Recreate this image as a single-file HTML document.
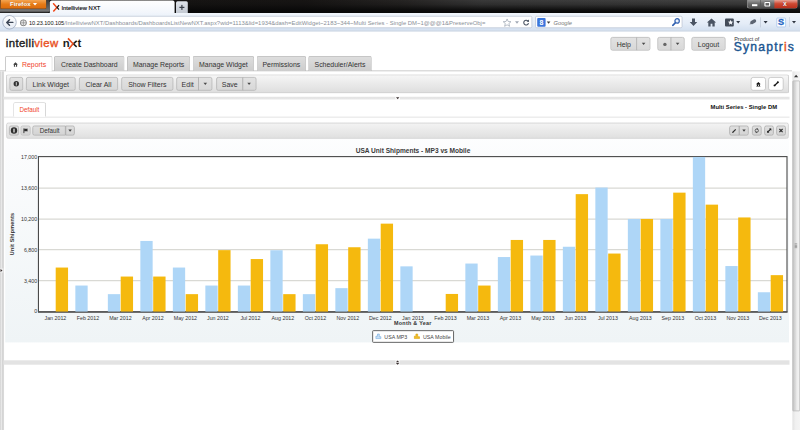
<!DOCTYPE html>
<html><head><meta charset="utf-8"><title>Intelliview NXT</title>
<style>
*{box-sizing:border-box;margin:0;padding:0}
html,body{font-family:"Liberation Sans",sans-serif;}
.abs{position:absolute}
#root{position:relative;width:8000px;height:4300px;overflow:hidden;background:#fff}
.t{position:absolute;white-space:nowrap;line-height:1;color:#333}
.btn{position:absolute;border:8px solid #b2b2b2;border-radius:20px;background:linear-gradient(#e2e2e2,#d8d8d8);font-size:70px;letter-spacing:-0.2px;color:#333;text-align:center;white-space:nowrap}
.arr{border-left:18.5px solid transparent;border-right:18.5px solid transparent;border-top:23px solid #4a4a4a;width:0;height:0}
.tb{top:770px;height:137px;line-height:130px}
.wb{top:1256px;height:99px;background:linear-gradient(#dedede,#d4d4d4);border-color:#ababab}
.tab{position:absolute;top:560px;height:150px;border:8px solid #b5b5b5;border-bottom:none;border-radius:20px 20px 0 0;background:linear-gradient(#dedede,#cdcdcd);font-size:69.5px;line-height:154px;text-align:center;color:#333;white-space:nowrap}
</style><style>html,body{width:800px;height:430px;overflow:hidden;background:#fff;margin:0} #clip{position:relative;width:800px;height:430px;overflow:hidden;contain:strict} #root{transform:scale(0.1);transform-origin:0 0}</style></head><body><div id="clip"><div id="root">

<!-- browser chrome -->
<div class="abs" style="left:0;top:0;width:8000px;height:130px;background:linear-gradient(to bottom,rgba(8,8,8,0) 0,rgba(8,8,8,0.25) 35%,rgba(8,8,8,0.85) 75%,rgba(8,8,8,1) 100%),linear-gradient(100deg,#151312 0,#171514 38%,#262423 50%,#3a3a3a 60%,#444 100%)"></div>
<div class="abs" style="left:0;top:0;width:496px;height:128px;background:linear-gradient(#3a3a3a,#6a6a6a 72%,#767676 84%,#4a4a4a 94%,#222);border-radius:0 0 20px 0"></div>
<div class="abs" style="left:0;top:0;width:466px;height:92px;background:linear-gradient(#f4a552,#e67a16 50%,#dc6c0c);border-radius:0 0 20px 20px;border:6px solid #9a4c08;border-top:none"></div>
<div class="t" style="left:100px;top:9px;font-size:62px;font-weight:bold;color:#fff;text-shadow:0 0 6px #a85a12">Firefox</div>
<div class="abs" style="left:329px;top:31px;border-left:21px solid transparent;border-right:21px solid transparent;border-top:25px solid #fff"></div>
<div class="abs" style="left:498px;top:6px;width:1248px;height:130px;background:linear-gradient(#fefefe,#f1f5fb);border-radius:20px 20px 0 0"></div>
<svg class="abs" style="left:522px;top:28px" width="80" height="100" viewBox="0 0 8 10"><path d="M0.9 0.5 L4.7 4.7 L1.1 8.7" stroke="#f0491a" stroke-width="1.5" fill="none"/><path d="M6.8 2.3 L4.9 4.7 L6.8 6.9" stroke="#1a1a1a" stroke-width="1.25" fill="none"/></svg>
<div class="t" style="left:614px;top:54px;font-size:59px;color:#000;-webkit-text-stroke:1.2px #000">Intelliview NXT</div>
<div class="abs" style="left:1760px;top:12px;width:118px;height:118px;background:linear-gradient(#dfe3e9,#c3c9d2);border-radius:15px 15px 0 0"></div>
<div class="abs" style="left:1794px;top:68px;width:50px;height:12px;background:#3a3f48"></div>
<div class="abs" style="left:1813px;top:49px;width:12px;height:50px;background:#3a3f48"></div>
<!-- window controls -->
<div class="abs" style="left:7470px;top:0;width:506px;height:86px;border-radius:0 0 25px 25px;background:linear-gradient(#9a9a9a,#6c6c6c 45%,#4e4e4e);border:6px solid #a9a9a9;border-top:none"></div>
<div class="abs" style="left:7744px;top:0;width:230px;height:82px;border-radius:0 0 25px 0;background:linear-gradient(#e9a698,#cf4a34 45%,#b9301c)"></div>
<div class="abs" style="left:7604px;top:0;width:6px;height:84px;background:#555"></div>
<div class="abs" style="left:7520px;top:42px;width:54px;height:20px;background:#fff;box-shadow:0 0 0 .40px #444"></div>
<div class="abs" style="left:7644px;top:19px;width:58px;height:46px;border:11.5px solid #fff;border-radius:8px;box-shadow:0 0 0 .40px #444"></div>
<div class="t" style="left:7830px;top:4px;font-size:68px;font-weight:bold;color:#fff;text-shadow:0 0 8px #600">x</div>

<!-- nav bar -->
<div class="abs" style="left:0;top:130px;width:8000px;height:184px;background:linear-gradient(#f0f5fb,#e4ecf7 60%,#d3e0f0);border-bottom:8px solid #b4c3d8"></div>
<div class="abs" style="left:120px;top:159px;width:5202px;height:122px;background:#fff;border:7px solid #b9c3d3;border-radius:15px"></div>
<div class="abs" style="left:24px;top:152px;width:142px;height:142px;border-radius:71px;background:linear-gradient(#ffffff,#e4eaf3);border:7px solid #93a1b8"></div>
<svg class="abs" style="left:54px;top:187px" width="84" height="74" viewBox="0 0 8 7"><path d="M7.2 3.5 H1.5 M3.9 0.9 L1.3 3.5 L3.9 6.1" stroke="#3c4656" stroke-width="1.35" fill="none" stroke-linecap="round" stroke-linejoin="round"/></svg>
<svg class="abs" style="left:198px;top:192px" width="72" height="72" viewBox="0 0 6.4 6.4"><circle cx="3.2" cy="3.2" r="2.7" fill="#e9e9e9" stroke="#777" stroke-width="0.8"/><path d="M0.6 3.2 H5.8 M3.2 0.6 V5.8" stroke="#888" stroke-width="0.6"/></svg>
<div class="t" style="left:290px;top:202px;font-size:56px;color:#111;letter-spacing:-0.5px">10.23.100.105<span id="urlg" style="color:#8a8f98;font-size:59px;letter-spacing:0.1px">/IntelliviewNXT/Dashboards/DashboardsListNewNXT.aspx?wid=1113&amp;lid=1934&amp;dash=EditWidget~2183~344~Multi Series - Single DM~1@@@1&amp;PreserveObj=</span></div>
<svg class="abs" style="left:5026px;top:182px" width="90" height="90" viewBox="0 0 9 9"><path d="M4.5 0.7 L5.6 3.3 L8.4 3.5 L6.3 5.3 L7 8.1 L4.5 6.6 L2 8.1 L2.7 5.3 L0.6 3.5 L3.4 3.3 Z" fill="#fff" stroke="#9aa3b0" stroke-width="0.7"/></svg>
<div class="abs" style="left:5150px;top:212px;border-left:20px solid transparent;border-right:20px solid transparent;border-top:26px solid #a0a8b5"></div>
<svg class="abs" style="left:5226px;top:190px" width="70" height="70" viewBox="0 0 7 7"><path d="M5.4 2.1 A2.4 2.4 0 1 0 5.9 4.2" stroke="#4d5766" stroke-width="1.1" fill="none"/><path d="M3.9 2.6 L6.5 2.9 L6.3 0.4 Z" fill="#4d5766"/></svg>
<div class="abs" style="left:5352px;top:159px;width:1472px;height:122px;background:#fff;border:7px solid #b9c3d3;border-radius:15px"></div>
<div class="abs" style="left:5372px;top:181px;width:84px;height:86px;background:#3b76dc;border-radius:10px"></div>
<div class="t" style="left:5394px;top:189px;font-size:70px;font-weight:bold;color:#fff">8</div>
<div class="abs" style="left:5468px;top:215px;border-left:18px solid transparent;border-right:18px solid transparent;border-top:22px solid #3a3a3a"></div>
<div class="t" style="left:5536px;top:199px;font-size:57px;color:#777;font-style:italic">Google</div>
<svg class="abs" style="left:6716px;top:176px" width="90" height="90" viewBox="0 0 9 9"><circle cx="5.5" cy="3.3" r="2.2" stroke="#2f5fb0" stroke-width="1.2" fill="#eaf2fc"/><path d="M3.9 5 L1.2 7.8" stroke="#2f5fb0" stroke-width="1.6" stroke-linecap="round"/></svg>
<svg class="abs" style="left:6890px;top:177px" width="90" height="100" viewBox="0 0 9 10"><path d="M3 0.8 H6 V4.2 H8.3 L4.5 8.4 L0.7 4.2 H3 Z" fill="#4a5463"/></svg>
<svg class="abs" style="left:7065px;top:176px" width="100" height="100" viewBox="0 0 10 10"><path d="M5 0.8 L9.6 5 H8.2 V8.8 H5.9 V6.1 H4.1 V8.8 H1.8 V5 H0.4 Z" fill="#4a5463"/></svg>
<div class="abs" style="left:7250px;top:186px;width:88px;height:78px;background:#434c5a;border-radius:10px"></div>
<svg class="abs" style="left:7276px;top:194px" width="60" height="60" viewBox="0 0 9 9"><path d="M4.5 0.7 L5.6 3.3 L8.4 3.5 L6.3 5.3 L7 8.1 L4.5 6.6 L2 8.1 L2.7 5.3 L0.6 3.5 L3.4 3.3 Z" fill="#f4f6fa"/></svg>
<div class="abs" style="left:7362px;top:210px;border-left:20px solid transparent;border-right:20px solid transparent;border-top:25px solid #2e3541"></div>
<div class="abs" style="left:7500px;top:200px;width:64px;height:34px;background:#5d6573;border-radius:20px;transform:rotate(-30deg)"></div>
<div class="abs" style="left:7496px;top:232px;width:26px;height:8px;background:#5d6573;transform:rotate(-30deg)"></div>
<div class="abs" style="left:7600px;top:174px;width:6px;height:100px;background:#b9c3d2"></div>
<div class="abs" style="left:7636px;top:210px;border-left:20px solid transparent;border-right:20px solid transparent;border-top:25px solid #2e3541"></div>
<div class="abs" style="left:7765px;top:178px;width:94px;height:94px;background:#fff;border:6px solid #8fb4e6;border-radius:10px"></div>
<div class="t" style="left:7779px;top:176px;font-size:92px;font-weight:bold;color:#2566c4;-webkit-text-stroke:3px #2566c4">S</div>
<div class="abs" style="left:7890px;top:170px;width:6px;height:100px;background:#c4cddb"></div>
<div class="abs" style="left:7920px;top:210px;border-left:20px solid transparent;border-right:20px solid transparent;border-top:25px solid #2e3541"></div>

<!-- page header -->
<div class="t" id="logo1" style="left:58px;top:373px;font-size:114px;color:#1c1c1c;letter-spacing:3.6px;-webkit-text-stroke:3.8px #1c1c1c">intelli<span id="logo2" style="color:#e8501e;-webkit-text-stroke:3.8px #e8501e">view</span></div>
<div class="t" id="logon" style="left:628px;top:373px;font-size:114px;font-weight:bold;color:#1c1c1c">n</div>
<div class="t" id="logot" style="left:774px;top:373px;font-size:114px;font-weight:bold;color:#1c1c1c;letter-spacing:3px">t</div>
<svg class="abs" style="left:660px;top:362px" width="120" height="150" viewBox="0 0 12 15"><path d="M10.7 4.6 L7.3 7.6 L10.7 10.6" stroke="#1c1c1c" stroke-width="1.6" fill="none"/><path d="M2 2.2 L7 7.6 L2.8 12.8" stroke="#e8501e" stroke-width="1.6" fill="none"/></svg>

<div class="btn" style="left:6105px;top:370px;width:266px;height:136px;line-height:142px;border-radius:20px 0 0 20px">Help</div>
<div class="btn" style="left:6363px;top:370px;width:140px;height:136px;border-radius:0 20px 20px 0"></div>
<div class="abs arr" style="left:6418px;top:428px"></div>
<div class="btn" style="left:6574px;top:370px;width:140px;height:136px;border-radius:20px 0 0 20px"></div>
<div class="abs" style="left:6632px;top:427px;width:34px;height:34px;border-radius:20px;background:#666"></div>
<div class="btn" style="left:6706px;top:370px;width:140px;height:136px;border-radius:0 20px 20px 0"></div>
<div class="abs arr" style="left:6758px;top:428px"></div>
<div class="btn" style="left:6915px;top:370px;width:340px;height:136px;line-height:142px">Logout</div>
<div class="t" style="left:7342px;top:363px;font-size:55px;color:#333">Product of</div>
<div class="t" id="syn" style="left:7338px;top:405px;font-size:122px;letter-spacing:11.5px;color:#1a5590;-webkit-text-stroke:4px #1a5590">Synaptr<span style="color:#e8501e;-webkit-text-stroke:4px #e8501e">i</span>s</div>

<!-- main tabs -->
<div class="abs" style="left:0;top:704px;width:7920px;height:9px;background:#c6c6c6"></div>
<div class="tab" style="left:50px;width:476px;background:#fff;color:#f0452a;height:156px;border-color:#bebebe;padding-left:106px">Reports</div>
<svg class="abs" style="left:130px;top:620px" width="50" height="50" viewBox="0 0 5 5"><path d="M2.5 0.2 L4.9 2.5 H4.1 V4.8 H0.9 V2.5 H0.1 Z" fill="#444"/><rect x="2" y="3" width="1" height="1.8" fill="#fff"/></svg>
<div class="tab" style="left:540px;width:706px">Create Dashboard</div>
<div class="tab" style="left:1270px;width:632px">Manage Reports</div>
<div class="tab" style="left:1926px;width:616px">Manage Widget</div>
<div class="tab" style="left:2566px;width:496px">Permissions</div>
<div class="tab" style="left:3082px;width:636px">Scheduler/Alerts</div>

<!-- left page frame -->
<div class="abs" style="left:0;top:714px;width:41px;height:3600px;background:linear-gradient(90deg,#d9d9d9 0,#dadada 19%,#e8e8e8 27%,#e8e8e8 50%,#d5d5d5 60%,#d6d6d6 84%,#f6f6f6 100%)"></div>
<div class="abs" style="left:0;top:2684px;width:34px;height:42px;background:#ededed"></div>
<div class="abs" style="left:5px;top:2689px;border-top:16px solid transparent;border-bottom:16px solid transparent;border-left:20px solid #3a3030"></div>

<!-- toolbar -->
<div class="abs" style="left:60px;top:744px;width:7830px;height:190px;border:8px solid #c6c6c6;border-bottom-color:#bdbdbd;border-radius:20px;background:linear-gradient(#f6f6f6,#ececec 40%,#dedede)"></div>
<div class="btn tb" style="left:95px;width:136px"></div>
<div class="abs" style="left:136px;top:811px;width:54px;height:54px;border-radius:30px;background:#333"></div>
<div class="abs" style="left:158px;top:821px;width:10px;height:34px;background:#ccc"></div>
<div class="btn tb" style="left:260px;width:496px">Link Widget</div>
<div class="btn tb" style="left:790px;width:390px">Clear All</div>
<div class="btn tb" style="left:1213px;width:520px">Show Filters</div>
<div class="btn tb" style="left:1763px;width:226px;border-radius:20px 0 0 20px">Edit</div>
<div class="btn tb" style="left:1981px;width:142px;border-radius:0 20px 20px 0"></div>
<div class="abs arr" style="left:2035px;top:827px"></div>
<div class="btn tb" style="left:2162px;width:270px;border-radius:20px 0 0 20px">Save</div>
<div class="btn tb" style="left:2424px;width:140px;border-radius:0 20px 20px 0"></div>
<div class="abs arr" style="left:2473px;top:827px"></div>
<div class="btn tb" style="left:7507px;width:152px;background:#fff;border-color:#c2c2c2;border-radius:25px"></div>
<svg class="abs" style="left:7560px;top:817px" width="48" height="50" viewBox="0 0 5 5.2"><path d="M2.5 0.2 L5 2.7 H0 Z" fill="#111"/><rect x="0.9" y="2.6" width="3.2" height="2" fill="#111"/><rect x="2.05" y="3.2" width="0.9" height="1.4" fill="#fff"/><rect x="0.3" y="4.5" width="4.4" height="0.6" fill="#111"/></svg>
<div class="btn tb" style="left:7682px;width:154px;background:#fff;border-color:#c2c2c2;border-radius:25px"></div>
<svg class="abs" style="left:7730px;top:808px" width="60" height="60" viewBox="0 0 6 6"><path d="M1.5 4.8 L4.9 1.5" stroke="#111" stroke-width="1.3"/><circle cx="1.55" cy="4.75" r="1" fill="#111"/><circle cx="4.85" cy="1.55" r="1" fill="#111"/></svg>

<!-- splitter 1 -->
<div class="abs" style="left:35px;top:968px;width:7860px;height:26px;background:linear-gradient(#e0e0e0,#e8e8e8 50%,#e0e0e0)"></div>
<div class="abs" style="left:3954px;top:966px;width:46px;height:30px;background:#fff"></div>
<div class="abs" style="left:3960px;top:972px;border-left:17px solid transparent;border-right:17px solid transparent;border-top:20px solid #3a3030"></div>

<!-- Default tab row -->
<div class="abs" style="left:35px;top:1167px;width:7860px;height:8px;background:#dcdcdc"></div>
<div class="abs" style="left:132px;top:1022px;width:328px;height:146px;border:8px solid #cdcdcd;border-bottom:none;border-radius:20px 20px 0 0;background:#fff"></div>
<div class="t" id="deftab" style="left:194px;top:1067px;font-size:63px;color:#f0452a">Default</div>
<div class="t" id="msdm" style="left:7105px;top:1045px;font-size:58.7px;font-weight:bold;color:#111">Multi Series - Single DM</div>

<!-- widget panel -->
<div class="abs" style="left:52px;top:1210px;width:7838px;height:2214px;background:linear-gradient(#ffffff,#fbfcfd 15%,#eff4f6)"></div>
<div class="abs" style="left:62px;top:1227px;width:7826px;height:160px;border:8px solid #cbcbcb;border-radius:20px;background:linear-gradient(#f3f3f3,#e0e0e0)"></div>
<div class="btn wb" style="left:90px;width:100px"></div>
<div class="abs" style="left:108px;top:1273px;width:64px;height:64px;border-radius:32px;background:#2e2e2e"></div>
<div class="abs" style="left:133px;top:1285px;width:14px;height:40px;border-radius:6px;background:#d8d8d8"></div>
<div class="btn wb" style="left:206px;width:100px;border-color:#bcbcbc"></div>
<svg class="abs" style="left:230px;top:1278px" width="60" height="60" viewBox="0 0 6 6"><path d="M0.9 0.6 V5.4" stroke="#2a2a2a" stroke-width="0.9"/><path d="M1.2 0.9 H5 L4.2 2.2 L5 3.5 H1.2 Z" fill="#2a2a2a"/></svg>
<div class="btn wb" style="left:324px;width:334px;line-height:89px;font-size:63px;padding-left:10px;border-radius:20px 0 0 20px">Default</div>
<div class="btn wb" style="left:654px;width:94px;border-radius:0 20px 20px 0"></div>
<div class="abs" style="left:684px;top:1296px;border-left:17.5px solid transparent;border-right:17.5px solid transparent;border-top:22px solid #3c3c3c"></div>
<div class="btn wb" style="left:7292px;width:104px;border-radius:20px 0 0 20px"></div>
<svg class="abs" style="left:7314px;top:1278px" width="60" height="60" viewBox="0 0 6 6"><path d="M1.2 4.7 L4.3 1.6" stroke="#2a2a2a" stroke-width="1.1"/><path d="M0.7 5.3 L1 4.1 L1.9 5 Z" fill="#2a2a2a"/></svg>
<div class="btn wb" style="left:7389px;width:98px;border-radius:0 20px 20px 0"></div>
<div class="abs" style="left:7423px;top:1296px;border-left:17.5px solid transparent;border-right:17.5px solid transparent;border-top:22px solid #3c3c3c"></div>
<div class="btn wb" style="left:7520px;width:96px"></div>
<svg class="abs" style="left:7538px;top:1276px" width="60" height="60" viewBox="0 0 6 6"><circle cx="3" cy="3" r="1.65" fill="none" stroke="#444" stroke-width="0.8"/><path d="M3 0.4 L4.4 1.3 L3 2.1 Z" fill="#444"/><path d="M3 5.6 L1.6 4.7 L3 3.9 Z" fill="#444"/></svg>
<div class="btn wb" style="left:7642px;width:96px"></div>
<svg class="abs" style="left:7662px;top:1276px" width="60" height="60" viewBox="0 0 6 6"><path d="M1.4 4.6 L4.6 1.4" stroke="#222" stroke-width="1.1"/><path d="M2.8 0.9 H5.1 V3.2 Z M0.9 2.8 V5.1 H3.2 Z" fill="#222"/></svg>
<div class="btn wb" style="left:7762px;width:97px"></div>
<svg class="abs" style="left:7785px;top:1281px" width="50" height="50" viewBox="0 0 5 5"><path d="M0.9 0.9 L4.1 4.1 M4.1 0.9 L0.9 4.1" stroke="#2e2e2e" stroke-width="1.15"/></svg>

<svg id="chart" width="8000" height="4300" viewBox="0 0 800 430" style="position:absolute;left:0;top:0">
<style>.ax{font-family:"Liberation Sans",sans-serif;font-size:5.3px;fill:#333} .bt{font-family:"Liberation Sans",sans-serif;font-size:5.3px;font-weight:bold;fill:#333}</style>
<rect x="38.45" y="156.6" width="748.55" height="155.25000000000003" fill="#fff"/>
<line x1="38.45" x2="787.0" y1="280.60" y2="280.60" stroke="#d9d9d4" stroke-width="1.05"/><line x1="38.45" x2="787.0" y1="249.60" y2="249.60" stroke="#d9d9d4" stroke-width="1.05"/><line x1="38.45" x2="787.0" y1="219.10" y2="219.10" stroke="#d9d9d4" stroke-width="1.05"/><line x1="38.45" x2="787.0" y1="188.10" y2="188.10" stroke="#d9d9d4" stroke-width="1.05"/>
<rect x="38.45" y="156.6" width="748.55" height="155.25000000000003" fill="none" stroke="#4a4a4a" stroke-width="1.1"/>
<line x1="38.050000000000004" x2="787.4" y1="311.85" y2="311.85" stroke="#555" stroke-width="1.3"/>
<g><rect x="55.70" y="267.55" width="12.35" height="44.20" fill="#f5b90e"/><rect x="75.35" y="285.55" width="12.3" height="26.20" fill="#aed6f7"/><rect x="107.85" y="294.15" width="12.3" height="17.60" fill="#aed6f7"/><rect x="120.70" y="276.55" width="12.35" height="35.20" fill="#f5b90e"/><rect x="140.35" y="240.95" width="12.3" height="70.80" fill="#aed6f7"/><rect x="153.20" y="276.55" width="12.35" height="35.20" fill="#f5b90e"/><rect x="172.85" y="267.55" width="12.3" height="44.20" fill="#aed6f7"/><rect x="185.70" y="294.15" width="12.35" height="17.60" fill="#f5b90e"/><rect x="205.35" y="285.55" width="12.3" height="26.20" fill="#aed6f7"/><rect x="218.20" y="250.15" width="12.35" height="61.60" fill="#f5b90e"/><rect x="237.85" y="285.55" width="12.3" height="26.20" fill="#aed6f7"/><rect x="250.70" y="259.05" width="12.35" height="52.70" fill="#f5b90e"/><rect x="270.35" y="250.25" width="12.3" height="61.50" fill="#aed6f7"/><rect x="283.20" y="294.15" width="12.35" height="17.60" fill="#f5b90e"/><rect x="302.85" y="294.15" width="12.3" height="17.60" fill="#aed6f7"/><rect x="315.70" y="244.25" width="12.35" height="67.50" fill="#f5b90e"/><rect x="335.35" y="288.15" width="12.3" height="23.60" fill="#aed6f7"/><rect x="348.20" y="247.25" width="12.35" height="64.50" fill="#f5b90e"/><rect x="367.85" y="238.65" width="12.3" height="73.10" fill="#aed6f7"/><rect x="380.70" y="223.65" width="12.35" height="88.10" fill="#f5b90e"/><rect x="400.35" y="266.35" width="12.3" height="45.40" fill="#aed6f7"/><rect x="445.70" y="293.95" width="12.35" height="17.80" fill="#f5b90e"/><rect x="465.35" y="263.55" width="12.3" height="48.20" fill="#aed6f7"/><rect x="478.20" y="285.55" width="12.35" height="26.20" fill="#f5b90e"/><rect x="497.85" y="257.05" width="12.3" height="54.70" fill="#aed6f7"/><rect x="510.70" y="239.95" width="12.35" height="71.80" fill="#f5b90e"/><rect x="530.35" y="255.55" width="12.3" height="56.20" fill="#aed6f7"/><rect x="543.20" y="239.95" width="12.35" height="71.80" fill="#f5b90e"/><rect x="562.85" y="246.75" width="12.3" height="65.00" fill="#aed6f7"/><rect x="575.70" y="194.15" width="12.35" height="117.60" fill="#f5b90e"/><rect x="595.35" y="187.55" width="12.3" height="124.20" fill="#aed6f7"/><rect x="608.20" y="253.55" width="12.35" height="58.20" fill="#f5b90e"/><rect x="627.85" y="218.95" width="12.3" height="92.80" fill="#aed6f7"/><rect x="640.70" y="218.95" width="12.35" height="92.80" fill="#f5b90e"/><rect x="660.35" y="218.95" width="12.3" height="92.80" fill="#aed6f7"/><rect x="673.20" y="192.65" width="12.35" height="119.10" fill="#f5b90e"/><rect x="692.85" y="156.95" width="12.3" height="154.80" fill="#aed6f7"/><rect x="705.70" y="204.65" width="12.35" height="107.10" fill="#f5b90e"/><rect x="725.35" y="266.05" width="12.3" height="45.70" fill="#aed6f7"/><rect x="738.20" y="217.45" width="12.35" height="94.30" fill="#f5b90e"/><rect x="757.85" y="292.25" width="12.3" height="19.50" fill="#aed6f7"/><rect x="770.70" y="275.15" width="12.35" height="36.60" fill="#f5b90e"/></g>
<line x1="38.050000000000004" x2="787.4" y1="312.15000000000003" y2="312.15000000000003" stroke="#555" stroke-width="0.8" opacity="0.85"/>
<text x="37.2" y="313.48" text-anchor="end" class="ax">0</text><text x="37.2" y="282.53" text-anchor="end" class="ax">3,400</text><text x="37.2" y="251.53" text-anchor="end" class="ax">6,800</text><text x="37.2" y="221.03" text-anchor="end" class="ax">10,200</text><text x="37.2" y="190.03" text-anchor="end" class="ax">13,600</text><text x="37.2" y="158.83" text-anchor="end" class="ax">17,000</text>
<text x="55.40" y="319.75" text-anchor="middle" class="ax">Jan 2012</text><text x="87.90" y="319.75" text-anchor="middle" class="ax">Feb 2012</text><text x="120.40" y="319.75" text-anchor="middle" class="ax">Mar 2012</text><text x="152.90" y="319.75" text-anchor="middle" class="ax">Apr 2012</text><text x="185.40" y="319.75" text-anchor="middle" class="ax">May 2012</text><text x="217.90" y="319.75" text-anchor="middle" class="ax">Jun 2012</text><text x="250.40" y="319.75" text-anchor="middle" class="ax">Jul 2012</text><text x="282.90" y="319.75" text-anchor="middle" class="ax">Aug 2012</text><text x="315.40" y="319.75" text-anchor="middle" class="ax">Oct 2012</text><text x="347.90" y="319.75" text-anchor="middle" class="ax">Nov 2012</text><text x="380.40" y="319.75" text-anchor="middle" class="ax">Dec 2012</text><text x="412.90" y="319.75" text-anchor="middle" class="ax">Jan 2013</text><text x="445.40" y="319.75" text-anchor="middle" class="ax">Feb 2013</text><text x="477.90" y="319.75" text-anchor="middle" class="ax">Mar 2013</text><text x="510.40" y="319.75" text-anchor="middle" class="ax">Apr 2013</text><text x="542.90" y="319.75" text-anchor="middle" class="ax">May 2013</text><text x="575.40" y="319.75" text-anchor="middle" class="ax">Jun 2013</text><text x="607.90" y="319.75" text-anchor="middle" class="ax">Jul 2013</text><text x="640.40" y="319.75" text-anchor="middle" class="ax">Aug 2013</text><text x="672.90" y="319.75" text-anchor="middle" class="ax">Sep 2013</text><text x="705.40" y="319.75" text-anchor="middle" class="ax">Oct 2013</text><text x="737.90" y="319.75" text-anchor="middle" class="ax">Nov 2013</text><text x="770.40" y="319.75" text-anchor="middle" class="ax">Dec 2013</text>
<text x="413" y="152.8" text-anchor="middle" class="bt" style="font-size:6.57px;fill:#3a3a3a">USA Unit Shipments - MP3 vs Mobile</text>
<text x="412.9" y="325.2" text-anchor="middle" class="bt" style="font-size:5.4px;letter-spacing:0.28px">Month &amp; Year</text>
<text transform="translate(13.9,234) rotate(-90)" text-anchor="middle" class="bt" style="font-size:5.4px;letter-spacing:0.2px">Unit Shipments</text>
</svg>

<!-- legend -->
<div class="abs" style="left:3722px;top:3302px;width:818px;height:126px;background:#fff;border:9px solid #555;border-radius:12px"></div>
<svg class="abs" style="left:3750px;top:3330px" width="70" height="64" viewBox="0 0 7 6.4"><path d="M0.9 5.6 V3.2 H2.5 V1 H4.3 V3.7 H5.9 V5.6 Z" fill="#c9e0f6" stroke="#6aa5dd" stroke-width="0.55"/></svg>
<div class="t" id="lg1" style="left:3843px;top:3346px;font-size:53px;color:#444">USA MP3</div>
<svg class="abs" style="left:4134px;top:3330px" width="70" height="64" viewBox="0 0 7 6.4"><path d="M0.9 5.6 V3.2 H2.5 V1 H4.3 V3.7 H6.1 V5.6 Z" fill="#f0bd28" stroke="#d69d06" stroke-width="0.55"/></svg>
<div class="t" id="lg2" style="left:4230px;top:3346px;font-size:53px;color:#444">USA Mobile</div>

<!-- splitter 2 -->
<div class="abs" style="left:35px;top:3603px;width:7860px;height:44px;background:#e3e3e3"></div>
<div class="abs" style="left:3953px;top:3602px;width:46px;height:46px;background:#f6f6f6"></div>
<div class="abs" style="left:3959px;top:3604px;border-left:17px solid transparent;border-right:17px solid transparent;border-bottom:19px solid #3a3030"></div>
<div class="abs" style="left:3959px;top:3629px;border-left:17px solid transparent;border-right:17px solid transparent;border-top:19px solid #3a3030"></div>

<!-- right scrollbar -->
<div class="abs" style="left:7924px;top:714px;width:76px;height:3600px;background:linear-gradient(90deg,#e2e2e2,#f0f0f0 40%,#f4f4f4)"></div>
<div class="abs" style="left:7940px;top:748px;border-left:21px solid transparent;border-right:21px solid transparent;border-bottom:25px solid #333"></div>
<div class="abs" style="left:7924px;top:806px;width:76px;height:3306px;border:6px solid #a8a8a8;border-radius:10px;background:linear-gradient(90deg,#c4c4c4,#dedede 45%,#ececec 60%,#f3f3f3)"></div>
<div class="abs" style="left:7946px;top:2436px;width:26px;height:6px;background:#777;box-shadow:0 13px 0 #777,0 26px 0 #777,0 39px 0 #777"></div>

</div></div></body></html>
